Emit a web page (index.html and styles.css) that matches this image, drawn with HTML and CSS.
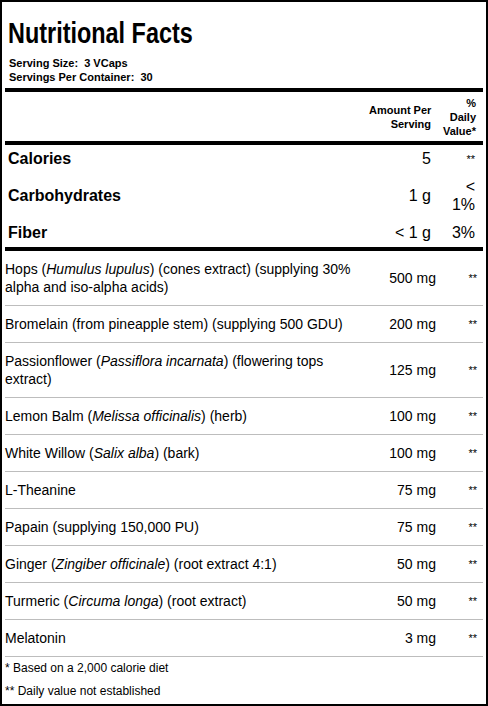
FILE: index.html
```html
<!DOCTYPE html>
<html lang="en">
<head>
    <meta charset="UTF-8">
    <meta name="viewport" content="width=device-width, initial-scale=1.0">
    <title>Nutritional Facts</title>
    <link rel="stylesheet" href="styles.css">
</head>
<body>
    <div class="label">
        <h1 class="title">Nutritional Facts</h1>
        <p class="serving">Serving Size:&nbsp; 3 VCaps</p>
        <p class="serving">Servings Per Container:&nbsp; 30</p>
        <table class="facts">
            <thead>
                <tr class="head">
                    <th class="name"></th>
                    <th class="amt">Amount Per<br>Serving</th>
                    <th class="dv">%<br>Daily<br>Value*</th>
                </tr>
            </thead>
            <tbody class="main">
                <tr>
                    <td class="name">Calories</td>
                    <td class="amt">5</td>
                    <td class="dv star">**</td>
                </tr>
                <tr>
                    <td class="name">Carbohydrates</td>
                    <td class="amt">1 g</td>
                    <td class="dv">&lt;<br>1%</td>
                </tr>
                <tr>
                    <td class="name">Fiber</td>
                    <td class="amt">&lt; 1 g</td>
                    <td class="dv">3%</td>
                </tr>
            </tbody>
            <tbody class="items">
                <tr>
                    <td class="name">Hops (<i>Humulus lupulus</i>) (cones extract) (supplying 30% alpha and iso-alpha acids)</td>
                    <td class="amt">500 mg</td>
                    <td class="dv">**</td>
                </tr>
                <tr>
                    <td class="name">Bromelain (from pineapple stem) (supplying 500 GDU)</td>
                    <td class="amt">200 mg</td>
                    <td class="dv">**</td>
                </tr>
                <tr>
                    <td class="name">Passionflower (<i>Passiflora incarnata</i>) (flowering tops extract)</td>
                    <td class="amt">125 mg</td>
                    <td class="dv">**</td>
                </tr>
                <tr>
                    <td class="name">Lemon Balm (<i>Melissa officinalis</i>) (herb)</td>
                    <td class="amt">100 mg</td>
                    <td class="dv">**</td>
                </tr>
                <tr>
                    <td class="name">White Willow (<i>Salix alba</i>) (bark)</td>
                    <td class="amt">100 mg</td>
                    <td class="dv">**</td>
                </tr>
                <tr>
                    <td class="name">L-Theanine</td>
                    <td class="amt">75 mg</td>
                    <td class="dv">**</td>
                </tr>
                <tr>
                    <td class="name">Papain (supplying 150,000 PU)</td>
                    <td class="amt">75 mg</td>
                    <td class="dv">**</td>
                </tr>
                <tr>
                    <td class="name">Ginger (<i>Zingiber officinale</i>) (root extract 4:1)</td>
                    <td class="amt">50 mg</td>
                    <td class="dv">**</td>
                </tr>
                <tr>
                    <td class="name">Turmeric (<i>Circuma longa</i>) (root extract)</td>
                    <td class="amt">50 mg</td>
                    <td class="dv">**</td>
                </tr>
                <tr>
                    <td class="name">Melatonin</td>
                    <td class="amt">3 mg</td>
                    <td class="dv">**</td>
                </tr>
            </tbody>
        </table>
        <p class="note">* Based on a 2,000 calorie diet</p>
        <p class="note">** Daily value not established</p>
    </div>
</body>
</html>
```

FILE: styles.css
```css
* {
    margin: 0;
    padding: 0;
    box-sizing: border-box;
}
body {
    font-family: "Liberation Sans", Arial, sans-serif;
    color: #000;
    background: #fff;
}
.label {
    width: 488px;
    height: 706px;
    border: 2px solid #000;
    padding: 0 3px;
}
/* narrow headline: no condensed face installed, so squeeze it */
.title {
    font-size: 30px;
    font-weight: bold;
    line-height: 34px;
    margin: 14px 0 6px;
    padding-left: 4px;
    transform: scaleX(0.78);
    transform-origin: left center;
    white-space: nowrap;
}
.serving {
    font-size: 11px;
    font-weight: bold;
    line-height: 14px;
    padding-left: 4px;
}
.facts {
    width: 100%;
    margin-top: 4px;
    border-collapse: collapse;
    table-layout: fixed;
    border-top: 4px solid #000;
}
.facts .name {
    width: 364px;
    text-align: left;
}
.facts .amt {
    width: 72px;
    text-align: right;
}
.facts .dv {
    width: 42px;
    text-align: right;
}
.head {
    border-bottom: 4px solid #000;
}
.head th {
    font-size: 11px;
    line-height: 14px;
    height: 53px;
    vertical-align: middle;
    white-space: nowrap;
}
.head .amt {
    padding-right: 10px;
}
.head .dv {
    padding-right: 7px;
}
.main {
    border-bottom: 4px solid #000;
}
.main td {
    font-size: 16px;
    line-height: 18px;
    padding: 5px 0;
    vertical-align: middle;
}
.main .name {
    font-weight: bold;
    padding-left: 3px;
}
.main .amt {
    padding-right: 10px;
}
.main .dv {
    padding-right: 8px;
}
.main .star {
    font-size: 11px;
}
.items tr {
    border-bottom: 1px solid #bdbdbd;
}
.items td {
    font-size: 14px;
    line-height: 18px;
    padding: 9px 0;
    vertical-align: middle;
}
.items .name {
    padding-right: 2px;
}
.items .amt {
    padding-right: 5px;
}
.items .dv {
    font-size: 11px;
    padding-right: 6px;
}
.note {
    font-size: 12px;
    line-height: 23px;
}
```
